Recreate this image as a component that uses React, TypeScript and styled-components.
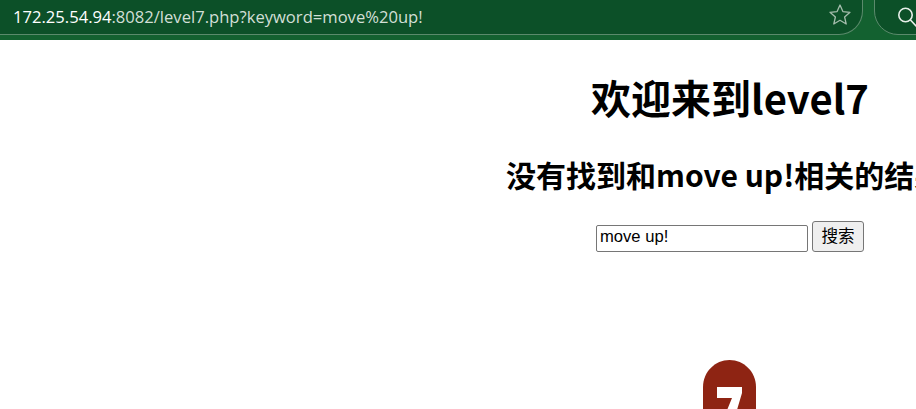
import React from "react";
import styled, { createGlobalStyle } from "styled-components";

const Global = createGlobalStyle`
  html, body { margin: 0; padding: 0; background: #fff; overflow: hidden; }
  body { width: 916px; height: 409px; }
`;

const Page = styled.div`
  width: 916px;
  height: 409px;
  overflow: hidden;
`;

const Toolbar = styled.header`
  height: 40px;
  background: #136130;
  display: flex;
  gap: 11px;
  align-items: flex-end;
  padding-bottom: 5px;
  box-sizing: border-box;
  overflow: hidden;
`;

const AddressPill = styled.div`
  flex: 0 0 863px;
  height: 60px;
  box-sizing: border-box;
  background: #0c5028;
  border: 1px solid #5b8a6c;
  border-left: none;
  border-radius: 0 24px 24px 0;
  display: flex;
  align-items: flex-end;
  justify-content: space-between;
  padding: 0 11px 6px 13px;
`;

const Url = styled.div`
  font-family: "Open Sans", "Noto Sans", sans-serif;
  font-size: 16.6px;
  line-height: 22px;
  color: #d2dfd6;
  white-space: nowrap;
`;

const Host = styled.span`
  color: #fff;
`;

const StarIcon = styled.svg`
  width: 22px;
  height: 22px;
  flex: none;
  margin-bottom: 2px;
`;

const SearchPill = styled.div`
  flex: 0 0 120px;
  height: 60px;
  box-sizing: border-box;
  background: #0c5028;
  border: 1px solid #5b8a6c;
  border-radius: 24px;
  display: flex;
  align-items: flex-end;
  padding: 0 0 6px 22px;
`;

const SearchIcon = styled.svg`
  width: 20px;
  height: 22px;
  flex: none;
`;

const Viewport = styled.main`
  width: 1460px;
  display: flex;
  flex-direction: column;
  align-items: center;
  font-family: "Noto Sans CJK SC", "Noto Sans", sans-serif;
  color: #000;
`;

const Title = styled.h1`
  margin: 28px 0 0;
  font-size: 40px;
  line-height: 58px;
  font-weight: 700;
  white-space: nowrap;
`;

const Result = styled.h2`
  margin: 26px 0 0;
  font-size: 30px;
  line-height: 44px;
  font-weight: 700;
  white-space: nowrap;
`;

const SearchForm = styled.form`
  margin-top: 25px;
  display: flex;
  align-items: flex-end;
  gap: 4px;
`;

const Input = styled.input`
  width: 212px;
  height: 27px;
  box-sizing: border-box;
  border: 1px solid #767676;
  border-radius: 2px;
  padding: 0 3px 3px;
  font-family: "Liberation Sans", Arial, sans-serif;
  font-size: 16.6px;
  color: #000;
  background: #fff;
  outline: none;
`;

const Button = styled.button`
  width: 52px;
  height: 31px;
  box-sizing: border-box;
  border: 1px solid #767676;
  border-radius: 3px;
  background: #efefef;
  padding: 0 0 3px;
  font-family: "Noto Sans CJK SC", sans-serif;
  font-size: 16.6px;
  color: #000;
`;

const Badge = styled.svg`
  width: 56px;
  height: 60px;
  margin-top: 108px;
  flex: none;
  display: block;
`;

export default function App() {
  return (
    <Page>
      <Global />
      <Toolbar>
        <AddressPill>
          <Url>
            <Host>172.25.54.94</Host>:8082/level7.php?keyword=move%20up!
          </Url>
          <StarIcon viewBox="0 0 22 22" fill="none" stroke="#a5bdad" strokeWidth="1.3" strokeLinejoin="round">
            <path d="M11 1l2.9 6.6 7.1.7-5.4 4.7 1.6 7-6.2-3.7L4.800 20l1.600-7L1 8.300l7.100-.7z" />
          </StarIcon>
        </AddressPill>
        <SearchPill>
          <SearchIcon viewBox="0 0 20 22" fill="none" stroke="#e8efe9" strokeWidth="1.6" strokeLinecap="round">
            <circle cx="8.5" cy="9" r="6.7" />
            <path d="M13.5 14l5.5 6" />
          </SearchIcon>
        </SearchPill>
      </Toolbar>
      <Viewport>
        <Title>欢迎来到level7</Title>
        <Result>没有找到和move up!相关的结果.</Result>
        <SearchForm onSubmit={(e) => e.preventDefault()}>
          <Input defaultValue="move up!" />
          <Button type="button">搜索</Button>
        </SearchForm>
        <Badge viewBox="0 0 56 60">
          <path d="M1 60V27C1 12 13 0 27.500 0S54 12 54 27v33z" fill="#8e2413" />
          <path d="M15 27h25v6L32 60H21l9-22H15z" fill="#fff" />
        </Badge>
      </Viewport>
    </Page>
  );
}
